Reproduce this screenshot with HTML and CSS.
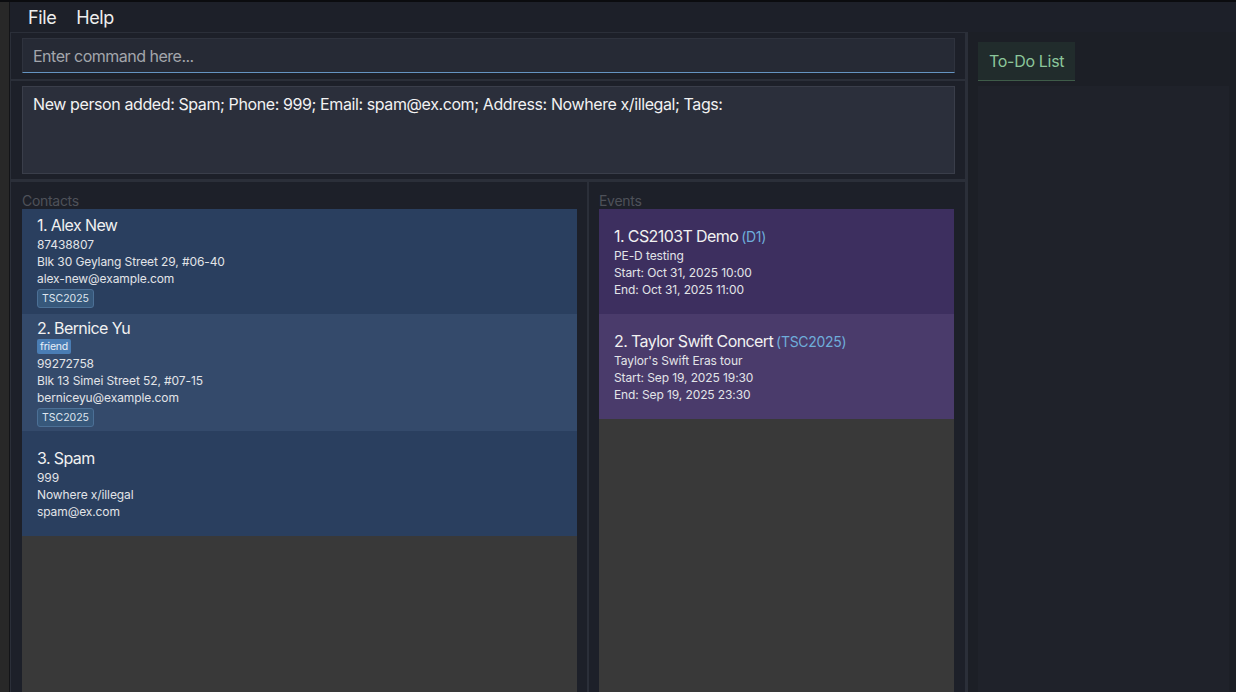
FILE: index.html
```html
<!DOCTYPE html>
<html>
<head>
<meta charset="utf-8">
<link rel="stylesheet" href="styles.css">
</head>
<body>
<div class="frame">
  <div class="edge"></div>
  <div class="app">
    <div class="menubar">
      <span class="menu-item">File</span>
      <span class="menu-item">Help</span>
    </div>
    <div class="main">
      <div class="leftcol">
        <div class="cmd-section">
          <div class="cmd-input">Enter command here...</div>
        </div>
        <div class="sep sep-thin"></div>
        <div class="result-section">
          <div class="result-box">New person added: Spam; Phone: 999; Email: spam@ex.com; Address: Nowhere x/illegal; Tags:</div>
        </div>
        <div class="sep sep-thick"></div>
        <div class="lists">
          <div class="panel panel-contacts">
            <div class="panel-label">Contacts</div>
            <div class="list">
              <div class="card contact c-odd">
                <div class="name">1. Alex New</div>
                <div class="line">87438807</div>
                <div class="line">Blk 30 Geylang Street 29, #06-40</div>
                <div class="line">alex-new@example.com</div>
                <div class="tags"><span class="tag">TSC2025</span></div>
              </div>
              <div class="card contact c-even">
                <div class="name">2. Bernice Yu</div>
                <div class="tags tags-top"><span class="tag tag-fill">friend</span></div>
                <div class="line">99272758</div>
                <div class="line">Blk 13 Simei Street 52, #07-15</div>
                <div class="line">berniceyu@example.com</div>
                <div class="tags"><span class="tag">TSC2025</span></div>
              </div>
              <div class="card contact c-odd">
                <div class="name">3. Spam</div>
                <div class="line">999</div>
                <div class="line">Nowhere x/illegal</div>
                <div class="line">spam@ex.com</div>
              </div>
            </div>
          </div>
          <div class="vdiv"></div>
          <div class="panel panel-events">
            <div class="panel-label">Events</div>
            <div class="list">
              <div class="card event e-odd">
                <div class="name">1. CS2103T Demo<span class="code">(D1)</span></div>
                <div class="line">PE-D testing</div>
                <div class="line">Start: Oct 31, 2025 10:00</div>
                <div class="line">End: Oct 31, 2025 11:00</div>
              </div>
              <div class="card event e-even">
                <div class="name">2. Taylor Swift Concert<span class="code">(TSC2025)</span></div>
                <div class="line">Taylor's Swift Eras tour</div>
                <div class="line">Start: Sep 19, 2025 19:30</div>
                <div class="line">End: Sep 19, 2025 23:30</div>
              </div>
            </div>
          </div>
        </div>
      </div>
      <div class="rightcol">
        <div class="tabbar">
          <div class="tab">To-Do List</div>
        </div>
        <div class="todo-panel"></div>
      </div>
    </div>
  </div>
</div>
</body>
</html>
```
FILE: styles.css
```css
html, body {
  margin: 0;
  padding: 0;
}
body {
  width: 1236px;
  height: 692px;
  overflow: hidden;
  background: #1d2029;
  font-family: Inter, "Noto Sans", sans-serif;
  color: #ececec;
}
.frame {
  display: flex;
  height: 692px;
  box-sizing: border-box;
  border-top: 2px solid #0b0c0f;
}
.edge {
  width: 9px;
  background: #282828;
  border-right: 1px solid #131417;
}
.app {
  flex: 1;
  display: flex;
  flex-direction: column;
  min-width: 0;
}
.menubar {
  height: 30px;
  display: flex;
  align-items: center;
  padding-left: 8px;
  background: #1d2029;
}
.menu-item {
  padding: 0 10px;
  font-size: 18px;
  letter-spacing: -0.4px;
  color: #ededed;
}
.main {
  flex: 1;
  display: flex;
  min-height: 0;
}
.leftcol {
  width: 958px;
  box-sizing: border-box;
  display: flex;
  flex-direction: column;
  border-top: 1px solid #2b2f39;
  border-left: 1px solid #2b2f39;
  border-right: 3px solid #2b2f39;
}
.cmd-section {
  padding: 5px 10px 6px 11px;
}
.cmd-input {
  height: 35px;
  box-sizing: border-box;
  background: #262a35;
  border: 1px solid #2f333e;
  border-bottom: 1px solid #6594c2;
  padding: 0 10px;
  display: flex;
  align-items: center;
  font-size: 16px;
  letter-spacing: -0.5px;
  color: #a3a6ac;
}
.sep {
  background: #2b2f39;
}
.sep-thin { height: 2px; }
.sep-thick { height: 3px; }
.result-section {
  padding: 5px 10px 5px 11px;
}
.result-box {
  height: 88px;
  box-sizing: border-box;
  background: #2b2f3b;
  border: 1px solid #3a3e4a;
  padding: 6px 10px;
  font-size: 16px;
  line-height: 22px;
  letter-spacing: -0.4px;
  color: #f2f2f2;
}
.lists {
  flex: 1;
  display: flex;
  min-height: 0;
}
.panel {
  display: flex;
  flex-direction: column;
}
.panel-contacts {
  width: 576px;
  padding: 0 10px 0 11px;
  box-sizing: border-box;
}
.panel-events {
  flex: 1;
  padding: 0 11px 0 10px;
}
.vdiv {
  width: 2px;
  background: #2b2f39;
}
.panel-label {
  height: 27px;
  box-sizing: border-box;
  padding-top: 11px;
  font-size: 14px;
  line-height: 16px;
  letter-spacing: -0.3px;
  color: #4e5159;
}
.list {
  flex: 1;
  background: #393939;
}
.card {
  box-sizing: border-box;
  min-height: 105px;
  padding: 4px 15px;
  display: flex;
  flex-direction: column;
  justify-content: center;
}
.c-odd { background: #2a3f5f; }
.c-even { background: #344a6b; }
.e-odd { background: #3d2f5f; }
.e-even { background: #4a3b6b; }
.name {
  font-size: 16px;
  line-height: 21px;
  letter-spacing: -0.6px;
  color: #f1f1f1;
}
.code {
  font-size: 14px;
  letter-spacing: -0.3px;
  color: #6fadda;
  margin-left: 3px;
}
.line {
  font-size: 12px;
  line-height: 17px;
  letter-spacing: -0.1px;
  color: #e2e4e8;
}
.tags {
  display: flex;
  padding: 2px 0 0;
}
.tags-top {
  padding: 0 0 1px;
}
.tag {
  font-size: 10.5px;
  line-height: 15px;
  padding: 1px 4px;
  border-radius: 3px;
  border: 1px solid #4c7096;
  background: #37587b;
  color: #dfe6ee;
}
.tag-fill {
  border: none;
  border-radius: 2px;
  padding: 0 3px;
  letter-spacing: -0.2px;
  background: #4a7db4;
  color: #e8eef6;
}
.rightcol {
  flex: 1;
  display: flex;
  flex-direction: column;
  padding: 10px 7px 0 10px;
  background: #1c1f26;
}
.tabbar {
  display: flex;
  height: 44px;
  align-items: flex-start;
}
.tab {
  height: 39px;
  box-sizing: border-box;
  padding: 0 11px;
  display: flex;
  align-items: center;
  background: #212c2c;
  border-bottom: 1px solid #3f5c49;
  font-size: 16px;
  letter-spacing: -0.3px;
  color: #8cc69b;
}
.todo-panel {
  flex: 1;
  background: #1f222a;
}
```
